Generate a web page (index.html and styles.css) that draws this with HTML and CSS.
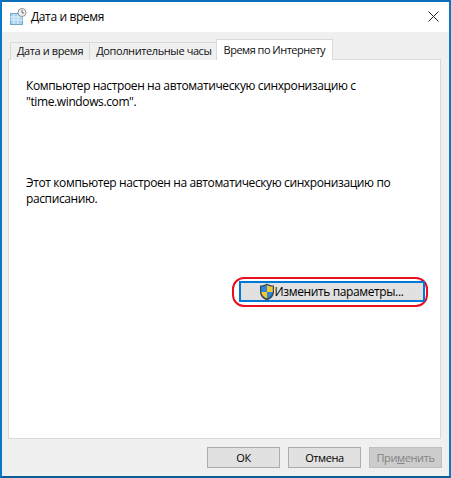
FILE: index.html
```html
<!DOCTYPE html>
<html lang="ru">
<head>
  <meta charset="UTF-8">
  <title>Дата и время</title>
  <link rel="stylesheet" href="styles.css">
</head>
<body>

<div class="okno">
  <div class="titulo">
    <svg class="icone-relogio" width="17" height="17" viewBox="0 0 17 17">
      <rect x="0.5" y="5.5" width="12" height="11" fill="#a9d3ee" stroke="#6fa8cf"/>
      <path d="M0 9h13M0 12h13M4 6v10M8 6v10" stroke="#e4f2fb"/>
      <circle cx="12" cy="4.5" r="4" fill="#f4f4f4" stroke="#8c8c8c"/>
      <path d="M12 2v3h2" fill="none" stroke="#666"/>
    </svg>
    <span class="titulo-texto">Дата и время</span>
    <svg class="fechar" width="11" height="11" viewBox="0 0 11 11">
      <path d="M0.5 0.5l10 10M10.5 0.5l-10 10" stroke="#222" fill="none"/>
    </svg>
  </div>

  <div class="conteudo">
    <div class="abas">
      <div class="aba">Дата и время</div>
      <div class="aba aba-larga">Дополнительные часы</div>
      <div class="aba ativa">Время по Интернету</div>
    </div>

    <div class="painel">
      <p class="texto-1">Компьютер настроен на автоматическую синхронизацию с<br>"time.windows.com".</p>
      <p class="texto-2">Этот компьютер настроен на автоматическую синхронизацию по<br>расписанию.</p>
      <div class="linha-alterar">
        <div class="destaque">
          <div class="botao-alterar">
            <svg width="16" height="18" viewBox="0 0 16 18">
              <path d="M8 0.5C6 2 3.500 2.500 1 2.500V9c0 4 3 7 7 8.500 4-1.500 7-4.500 7-8.500V2.500C12.500 2.500 10 2 8 0.500z" fill="#34465c"/>
              <path d="M8 2v7H2.200V3.600C4.300 3.500 6.300 3 8 2z" fill="#2f86d8"/>
              <path d="M8 2c1.700 1 3.700 1.500 5.800 1.600V9H8z" fill="#f7c72f"/>
              <path d="M8 9H2.200c.3 3 2.800 5.300 5.800 6.600z" fill="#f7c72f"/>
              <path d="M8 9h5.800c-.3 3-2.800 5.300-5.800 6.600z" fill="#2f86d8"/>
            </svg>
            <span>Изменить параметры...</span>
          </div>
        </div>
      </div>
    </div>

    <div class="rodape">
      <div class="botao">ОК</div>
      <div class="botao">Отмена</div>
      <div class="botao inativo">При<u>м</u>енить</div>
    </div>
  </div>
</div>

</body>
</html>
```
FILE: styles.css
```css
html {
  font-family: "Open Sans", "Noto Sans", sans-serif;
  font-size: 12px;
  letter-spacing: -0.38px;
}

body {
  margin: 0;
  width: 451px;
  height: 478px;
  overflow: hidden;
}

.okno {
  box-sizing: border-box;
  width: 451px;
  height: 478px;
  border: 2px solid #0a78c8;
  border-top-color: #0a6fb8;
  border-bottom-color: #0b5f96;
  display: flex;
  flex-direction: column;
  background: #f0f0f0;
  color: #000;
}

.titulo {
  box-sizing: border-box;
  height: 30px;
  background: #fff;
  display: flex;
  align-items: center;
  padding: 0 10px 2px 8px;
}

.icone-relogio {
  margin-right: 4px;
}

.titulo-texto {
  flex: 1;
}

.conteudo {
  flex: 1;
  display: flex;
  flex-direction: column;
  padding: 8px 7px 0 6px;
}

.abas {
  display: flex;
  height: 20px;
  margin-bottom: -1px;
  align-items: flex-end;
  padding-left: 2px;
  position: relative;
}

.aba {
  box-sizing: border-box;
  height: 18px;
  padding: 0 6px;
  font-size: 11px;
  letter-spacing: -0.4px;
  line-height: 16px;
  border: 1px solid #d9d9d9;
  border-bottom: 0;
  margin-right: -1px;
  background: #f0f0f0;
  color: #111;
}

.aba-larga {
  padding-right: 4px;
}

.aba.ativa {
  height: 21px;
  padding: 0 7px 0 7px;
  letter-spacing: -0.5px;
  line-height: 20px;
  background: #fff;
  position: relative;
  z-index: 1;
}

.painel {
  box-sizing: border-box;
  height: 380px;
  margin-right: 1px;
  background: #fff;
  border: 1px solid #d9d9d9;
  padding: 18px 12px 0 17px;
}

.painel p {
  margin: 0;
  line-height: 16px;
}

.texto-2 {
  padding-top: 65px;
}

.linha-alterar {
  display: flex;
  justify-content: flex-end;
  margin-top: 70px;
}

.destaque {
  border: 2px solid #e8101e;
  border-radius: 12px;
  padding: 2px 1px 3px 5px;
}

.botao-alterar {
  box-sizing: border-box;
  width: 186px;
  height: 21px;
  padding-right: 2px;
  border: 2px solid #0078d7;
  background: #e1e1e1;
  display: flex;
  align-items: center;
  justify-content: center;
}

.rodape {
  display: flex;
  justify-content: flex-end;
  gap: 8px;
  padding-top: 8px;
}

.botao {
  box-sizing: border-box;
  width: 73px;
  height: 21px;
  border: 1px solid #adadad;
  background: #e1e1e1;
  text-align: center;
  font-size: 11px;
  letter-spacing: -0.4px;
  line-height: 19px;
}

.botao.inativo {
  color: #838383;
  background: #ccc;
  border-color: #bfbfbf;
}
```
